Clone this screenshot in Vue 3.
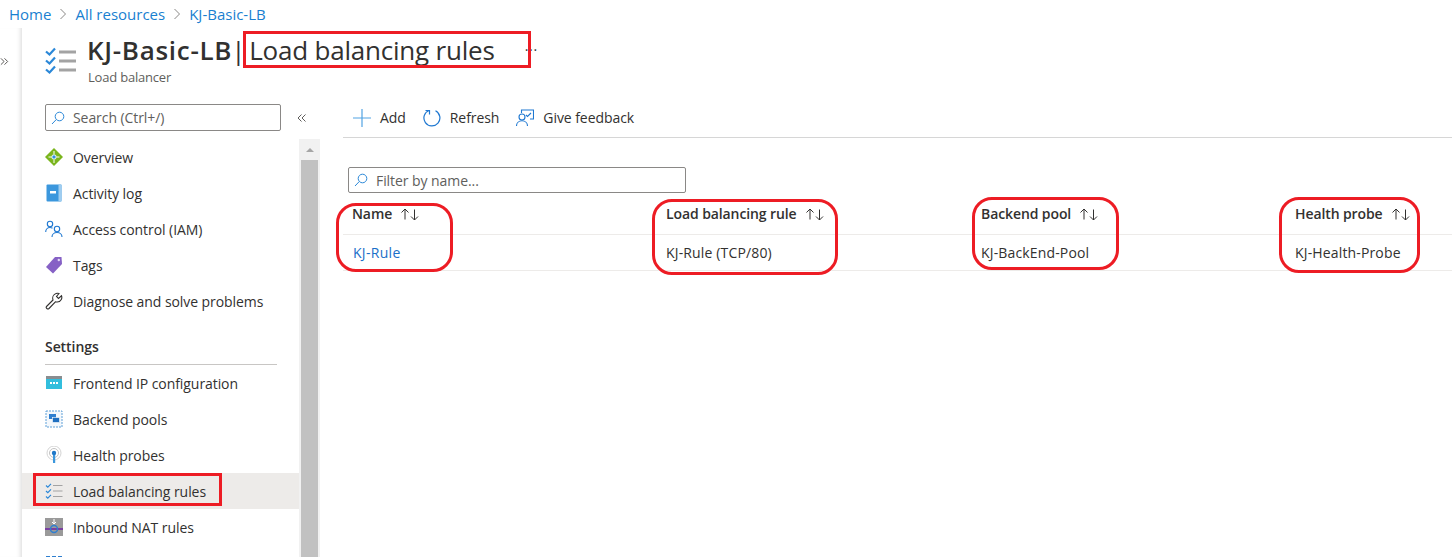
<script setup>
const cols = [
  { head: 'Name', val: 'KJ-Rule', link: true },
  { head: 'Load balancing rule', val: 'KJ-Rule (TCP/80)' },
  { head: 'Backend pool', val: 'KJ-BackEnd-Pool' },
  { head: 'Health probe', val: 'KJ-Health-Probe' }
]
</script>

<template>
  <div class="page">
    <nav class="crumbs">
      <a>Home</a>
      <svg class="chev" viewBox="0 0 8 12"><path d="M1.5 1l5 5-5 5" /></svg>
      <a>All resources</a>
      <svg class="chev" viewBox="0 0 8 12"><path d="M1.5 1l5 5-5 5" /></svg>
      <a>KJ-Basic-LB</a>
    </nav>
    <div class="shell">
      <div class="rail">
        <svg class="expand" viewBox="0 0 10 10"><path d="M1 1.5L4.5 5 1 8.5M5 1.5L8.5 5 5 8.5" /></svg>
      </div>
      <main class="blade">
        <header class="bladehead">
          <svg class="headicon" viewBox="0 0 32 28">
            <path class="chk" d="M1 4.5l3.5 3L10 1.500M1 13.500l3.500 3L10 10.500M1 22.500l3.500 3L10 19.500" />
            <path class="bars" d="M14 5h17M14 14h17M14 23h17" />
          </svg>
          <div class="titles">
            <h1><b>KJ-Basic-LB</b><span class="pipe">|</span><span class="sub">Load balancing rules</span><span class="dots">···</span></h1>
            <p>Load balancer</p>
          </div>
        </header>
        <div class="body">
          <aside class="side">
            <div class="searchrow">
              <div class="search">
                <svg class="mag" viewBox="0 0 14 14"><circle cx="8.500" cy="5.500" r="4.300" /><path d="M5.300 8.500L1 13" /></svg>
                <span>Search (Ctrl+/)</span>
              </div>
              <svg class="collapse" viewBox="0 0 10 10"><path d="M4.500 1.500L1 5l3.500 3.500M8.500 1.500L5 5l3.500 3.500" /></svg>
            </div>
            <div class="sidebody">
              <div class="sidemain">
                <div class="menu">
                  <div class="item">
                    <svg class="mi" viewBox="0 0 18 18"><path fill="#7ab51d" d="M9 0l9 9-9 9-9-9z" /><circle cx="9" cy="9" r="2.200" fill="#2f8fe0" stroke="#fff" /><path stroke="#fff" fill="none" d="M9 3v3M9 12v3M3.500 9h3M11.500 9h3" /></svg>
                    <span>Overview</span>
                  </div>
                  <div class="item">
                    <svg class="mi" viewBox="0 0 18 18"><rect x="1.500" y="0.500" width="15" height="17" rx="1" fill="#3b97dd" /><rect x="13.500" y="0.500" width="3" height="17" fill="#9fcdf0" /><rect x="5" y="7" width="6" height="2.500" fill="#fff" /></svg>
                    <span>Activity log</span>
                  </div>
                  <div class="item">
                    <svg class="mi line" viewBox="0 0 18 18"><circle cx="5" cy="4" r="2.700" /><path d="M.7 12c0-2.500 1.800-4.500 4.300-4.500 1 0 1.800.3 2.500.8" /><circle cx="12" cy="9" r="2.700" /><path d="M7 17c0-2.500 2-4.500 5-4.500s5 2 5 4.500" /></svg>
                    <span>Access control (IAM)</span>
                  </div>
                  <div class="item">
                    <svg class="mi" viewBox="0 0 18 18"><path fill="#8661c5" d="M10 1h6.500L17 8l-9 9.500L1 11z" /><circle cx="13.800" cy="4" r="1.200" fill="#e3d9f5" /></svg>
                    <span>Tags</span>
                  </div>
                  <div class="item">
                    <svg class="mi wrench" viewBox="0 0 18 18"><path d="M1.500 14.500L8 8c-.8-2.500.2-5.500 3-6.500 1-.4 2-.4 3 0L11.500 4.500 13.500 6.500 16.500 3.800c.5 1.200.4 2.500-.2 3.600-1.200 2.200-3.600 3-5.900 2.400L4 16.500c-.6.600-1.500.6-2.200 0-.7-.6-.8-1.400-.3-2z" /></svg>
                    <span>Diagnose and solve problems</span>
                  </div>
                </div>
                <div class="group">Settings</div>
                <div class="menu">
                  <div class="item">
                    <svg class="mi" viewBox="0 0 18 18"><rect x="1" y="2" width="16" height="13" fill="#32bedd" /><rect x="1" y="2" width="16" height="3" fill="#8a8d90" /><path fill="#fff" d="M5 8h2v2H5zM8 8h2v2H8zM11 8h2v2h-2z" /></svg>
                    <span>Frontend IP configuration</span>
                  </div>
                  <div class="item">
                    <svg class="mi" viewBox="0 0 18 18"><rect x="1" y="1" width="16" height="16" fill="#f4f8fc" stroke="#5ea0d8" stroke-dasharray="2 1" /><rect x="4" y="4" width="7" height="5" fill="#2f7fd0" /><rect x="7.500" y="7.500" width="7" height="5" fill="#1f6fc0" stroke="#fff" stroke-width=".6" /></svg>
                    <span>Backend pools</span>
                  </div>
                  <div class="item">
                    <svg class="mi" viewBox="0 0 18 18"><circle cx="9" cy="7" r="7" fill="none" stroke="#d4d4d4" /><circle cx="9" cy="7" r="4.500" fill="none" stroke="#c2c2c2" /><rect x="8" y="8" width="2.200" height="9" fill="#3b97dd" /><circle cx="9" cy="7" r="2.200" fill="#1f78c8" /></svg>
                    <span>Health probes</span>
                  </div>
                  <div class="item active">
                    <svg class="mi" viewBox="0 0 18 18"><path class="minichk" d="M1 3.500l1.800 1.700L6 1.800M1 9l1.800 1.700L6 7.300M1 14.500l1.800 1.700L6 12.800" /><path class="minibar" d="M8 3.500h9.500M8 9h9.500M8 14.500h9.500" /></svg>
                    <span>Load balancing rules</span>
                  </div>
                  <div class="item">
                    <svg class="mi" viewBox="0 0 18 18"><rect width="18" height="18" y="0" fill="#9a9a9a" /><path stroke="#fff" fill="none" d="M9 1v5M7 4l2 2 2-2" /><rect y="10" width="18" height="2" fill="#7a3fa0" /><circle cx="9" cy="11" r="3.500" fill="none" stroke="#2f7fd0" stroke-width="1.500" /></svg>
                    <span>Inbound NAT rules</span>
                  </div>
                  <div class="item">
                    <svg class="mi" viewBox="0 0 18 18"><path fill="#2f7fd0" d="M1 2h4v3H1zM7 2h4v3H7zM13 2h4v3h-4z" /></svg>
                  </div>
                </div>
              </div>
              <div class="scrollbar">
                <div class="arrow"></div>
                <div class="thumb"></div>
              </div>
            </div>
          </aside>
          <section class="content">
            <div class="toolbar">
              <div class="tool">
                <svg class="ti plus" viewBox="0 0 18 18"><path d="M9 0v18M0 9h18" /></svg>
                <span>Add</span>
              </div>
              <div class="tool">
                <svg class="ti refresh" viewBox="0 0 18 18"><path d="M6 1.500A8 8 0 1 0 12.500 1.800" /><path d="M6.500 5.500V1.500H2.500" /></svg>
                <span>Refresh</span>
              </div>
              <div class="tool">
                <svg class="ti fb" viewBox="0 0 18 18"><path d="M5.500 4V1h12v9h-3.500" /><path d="M10 6l1.500 1.500L15 4" /><circle cx="6" cy="8" r="3" /><path d="M.5 17c0-3 2.300-5.200 5.500-5.200s5.500 2.200 5.500 5.200" /></svg>
                <span>Give feedback</span>
              </div>
            </div>
            <div class="filter">
              <svg class="mag" viewBox="0 0 14 14"><circle cx="8.500" cy="5.500" r="4.300" /><path d="M5.300 8.500L1 13" /></svg>
              <span>Filter by name...</span>
            </div>
            <div class="table">
              <div class="row head">
                <div v-for="c in cols" :key="c.head" class="cell">
                  <b>{{ c.head }}</b>
                  <svg class="sort" viewBox="0 0 20 14"><path d="M5 12V1.500M1.500 5L5 1.500 8.500 5M14.500 2v10.500M11 9l3.500 3.500L18 9" /></svg>
                </div>
              </div>
              <div class="row data">
                <div v-for="c in cols" :key="c.val" class="cell">
                  <a v-if="c.link">{{ c.val }}</a>
                  <span v-else>{{ c.val }}</span>
                </div>
              </div>
            </div>
          </section>
        </div>
      </main>
    </div>
    <div class="mark m-title"></div>
    <div class="mark m-side"></div>
    <div class="mark round m-name"></div>
    <div class="mark round m-rule"></div>
    <div class="mark round m-pool"></div>
    <div class="mark round m-probe"></div>
  </div>
</template>

<style>
html, body { margin: 0; background: #fff; overflow: hidden; }
</style>

<style scoped>
.page {
  position: relative;
  width: 1452px;
  height: 557px;
  overflow: hidden;
  background: #fff;
  color: #323130;
  font-family: "Open Sans", "Noto Sans", sans-serif;
  font-size: 14px;
  letter-spacing: -0.07px;
}
.crumbs {
  height: 28px;
  padding-left: 9px;
  display: flex;
  align-items: center;
  box-sizing: border-box;
  font-size: 15px;
  letter-spacing: 0;
}
.crumbs a { color: #1a7fd0; }
.chev { width: 8px; height: 12px; margin: 0 8px; }
.chev path { fill: none; stroke: #8a8886; stroke-width: 1; }
.shell { display: flex; height: 529px; }
.rail {
  width: 22px;
  flex: none;
  background: #fff;
  position: relative;
  box-shadow: inset -5px 0 5px -4px #d8d8d8;
}
.expand { position: absolute; left: 0; top: 29px; width: 9px; height: 9px; }
.expand path { fill: none; stroke: #484644; stroke-width: 1; }
.blade { flex: 1; min-width: 0; display: flex; flex-direction: column; }
.bladehead { height: 72px; display: flex; padding-left: 23px; box-sizing: border-box; }
.headicon { width: 32px; height: 28px; margin-top: 19px; }
.chk { fill: none; stroke: #2b88d8; stroke-width: 2.200; }
.bars { fill: none; stroke: #a3a3a3; stroke-width: 2.800; }
.titles { margin-left: 10px; }
h1 {
  margin: 4px 0 0;
  height: 36px;
  font-size: 26px;
  line-height: 36px;
  font-weight: 400;
  display: flex;
  letter-spacing: 0.7px;
}
h1 b { font-weight: 600; }
.pipe { margin: 0 3px 0 -1px; }
.sub { letter-spacing: -0.2px; }
.dots { font-size: 14px; margin-left: 30px; }
.titles p { margin: 1px 0 0 1px; font-size: 13px; line-height: 16px; color: #605e5c; letter-spacing: -0.2px; }
.body { display: flex; flex: 1; min-height: 0; }
.side { width: 298px; display: flex; flex-direction: column; flex: none; }
.searchrow { display: flex; align-items: center; padding: 4px 0 0 23px; height: 27px; flex: none; }
.search {
  width: 234px;
  height: 25px;
  border: 1px solid #8a8886;
  border-radius: 2px;
  display: flex;
  align-items: center;
  flex: none;
  color: #605e5c;
}
.search .mag { margin-right: 8px; }
.mag { width: 14px; height: 14px; margin: 0 6px 0 5px; flex: none; }
.mag circle, .mag path { fill: none; stroke: #2b88d8; stroke-width: 1; }
.collapse { width: 10px; height: 10px; margin-left: 16px; flex: none; }
.collapse path { fill: none; stroke: #605e5c; stroke-width: 1; }
.sidebody { display: flex; flex: 1; min-height: 0; margin-top: 8px; }
.sidemain { width: 277px; flex: none; }
.menu { display: flex; flex-direction: column; }
.item { height: 36px; display: flex; align-items: center; padding-left: 23px; box-sizing: border-box; flex: none; }
.item span { margin-left: 10px; }
.mi { width: 18px; height: 18px; flex: none; }
.item.active { background: #edebe9; }
.line path, .line circle { fill: none; stroke: #1f78d1; stroke-width: 1.100; }
.wrench path { fill: #fff; stroke: #323130; stroke-width: 1.100; }
.minichk { fill: none; stroke: #2b88d8; stroke-width: 1.200; }
.minibar { fill: none; stroke: #a3a3a3; stroke-width: 1.200; }
.group {
  margin: 10px 22px 0 23px;
  height: 36px;
  line-height: 36px;
  box-sizing: border-box;
  border-bottom: 1px solid #c8c6c4;
  font-weight: 600;
  width: 232px;
}
.scrollbar { width: 21px; background: #f1f1f1; display: flex; flex-direction: column; align-items: center; }
.arrow {
  height: 21px;
  width: 18px;
  flex: none;
  position: relative;
}
.arrow::before {
  content: "";
  position: absolute;
  left: 5px;
  top: 9px;
  border-left: 4px solid transparent;
  border-right: 4px solid transparent;
  border-bottom: 4px solid #a6a6a6;
}
.thumb { flex: 1; width: 17px; background: #c1c1c1; }
.content { flex: 1; min-width: 0; padding-left: 23px; }
.toolbar {
  display: flex;
  align-items: center;
  height: 35px;
  padding: 0 0 2px 10px;
  border-bottom: 1px solid #d6d6d6;
  gap: 17px;
}
.tool { display: flex; align-items: center; gap: 9px; }
.ti { width: 18px; height: 18px; flex: none; }
.plus path { stroke: #52a3e3; fill: none; stroke-width: 1.200; }
.refresh path { stroke: #1f78d1; fill: none; stroke-width: 1.200; }
.fb path, .fb circle { stroke: #1f78d1; fill: none; stroke-width: 1.100; }
.filter {
  margin: 29px 0 0 5px;
  width: 336px;
  height: 24px;
  border: 1px solid #8a8886;
  border-radius: 2px;
  display: flex;
  align-items: center;
  color: #605e5c;
}
.filter .mag { margin-right: 8px; }
.table { margin-top: 1px; }
.row { display: grid; grid-template-columns: 314px 315px 314px 1fr; border-bottom: 1px solid #edebe9; }
.row.head { height: 40px; }
.row.data { height: 35px; letter-spacing: 0.15px; }
.cell { display: flex; align-items: center; padding-left: 9px; }
.row.head .cell { align-items: flex-start; padding-top: 8px; box-sizing: border-box; line-height: 24px; }
.row.head b { font-weight: 600; letter-spacing: -0.1px; }
.sort { width: 20px; height: 15px; margin: 5px 0 0 8px; }
.sort path { fill: none; stroke: #323130; stroke-width: 1; }
.cell a { color: #1a6fc9; margin-left: 1px; letter-spacing: 0.3px; }
.mark { position: absolute; box-sizing: border-box; border: 3px solid #ed1c24; pointer-events: none; }
.round { border-radius: 20px; }
.m-title { left: 243px; top: 31px; width: 288px; height: 37px; }
.m-side { left: 33px; top: 473px; width: 189px; height: 33px; }
.m-name { left: 336px; top: 203px; width: 117px; height: 69px; }
.m-rule { left: 652px; top: 199px; width: 186px; height: 76px; }
.m-pool { left: 972px; top: 197px; width: 147px; height: 73px; }
.m-probe { left: 1279px; top: 197px; width: 141px; height: 76px; }
</style>
